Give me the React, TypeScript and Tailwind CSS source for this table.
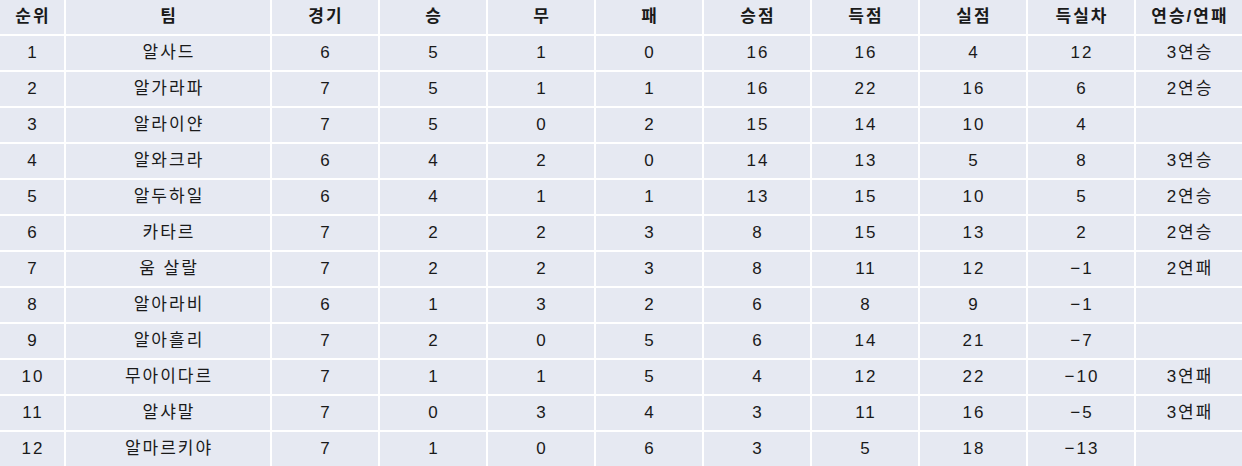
const HEADERS = ["순위", "팀", "경기", "승", "무", "패", "승점", "득점", "실점", "득실차", "연승/연패"];

const ROWS: string[][] = [
  ["1", "알사드", "6", "5", "1", "0", "16", "16", "4", "12", "3연승"],
  ["2", "알가라파", "7", "5", "1", "1", "16", "22", "16", "6", "2연승"],
  ["3", "알라이얀", "7", "5", "0", "2", "15", "14", "10", "4", ""],
  ["4", "알와크라", "6", "4", "2", "0", "14", "13", "5", "8", "3연승"],
  ["5", "알두하일", "6", "4", "1", "1", "13", "15", "10", "5", "2연승"],
  ["6", "카타르", "7", "2", "2", "3", "8", "15", "13", "2", "2연승"],
  ["7", "움 살랄", "7", "2", "2", "3", "8", "11", "12", "−1", "2연패"],
  ["8", "알아라비", "6", "1", "3", "2", "6", "8", "9", "−1", ""],
  ["9", "알아흘리", "7", "2", "0", "5", "6", "14", "21", "−7", ""],
  ["10", "무아이다르", "7", "1", "1", "5", "4", "12", "22", "−10", "3연패"],
  ["11", "알샤말", "7", "0", "3", "4", "3", "11", "16", "−5", "3연패"],
  ["12", "알마르키야", "7", "1", "0", "6", "3", "5", "18", "−13", ""],
];

export default function App() {
  return (
    <div
      className="w-[1242px] h-[466px] bg-white text-[#1a1a1a] text-[17px]"
      style={{ fontFamily: '"Liberation Sans", "Noto Sans CJK KR", sans-serif' }}
    >
      <div className="grid grid-cols-[64px_204px_repeat(9,1fr)] auto-rows-[34px] gap-[2px]">
        {HEADERS.map((h) => (
          <div key={h} className="bg-[#e6e9f2] flex items-center justify-center pl-[2px] font-bold tracking-[2px]">
            {h}
          </div>
        ))}
        {ROWS.map((row) =>
          row.map((cell, i) => (
            <div key={row[0] + "-" + i} className="bg-[#e6e9f2] flex items-center justify-center pl-[2px] tracking-[2px]">
              {cell}
            </div>
          ))
        )}
      </div>
    </div>
  );
}
